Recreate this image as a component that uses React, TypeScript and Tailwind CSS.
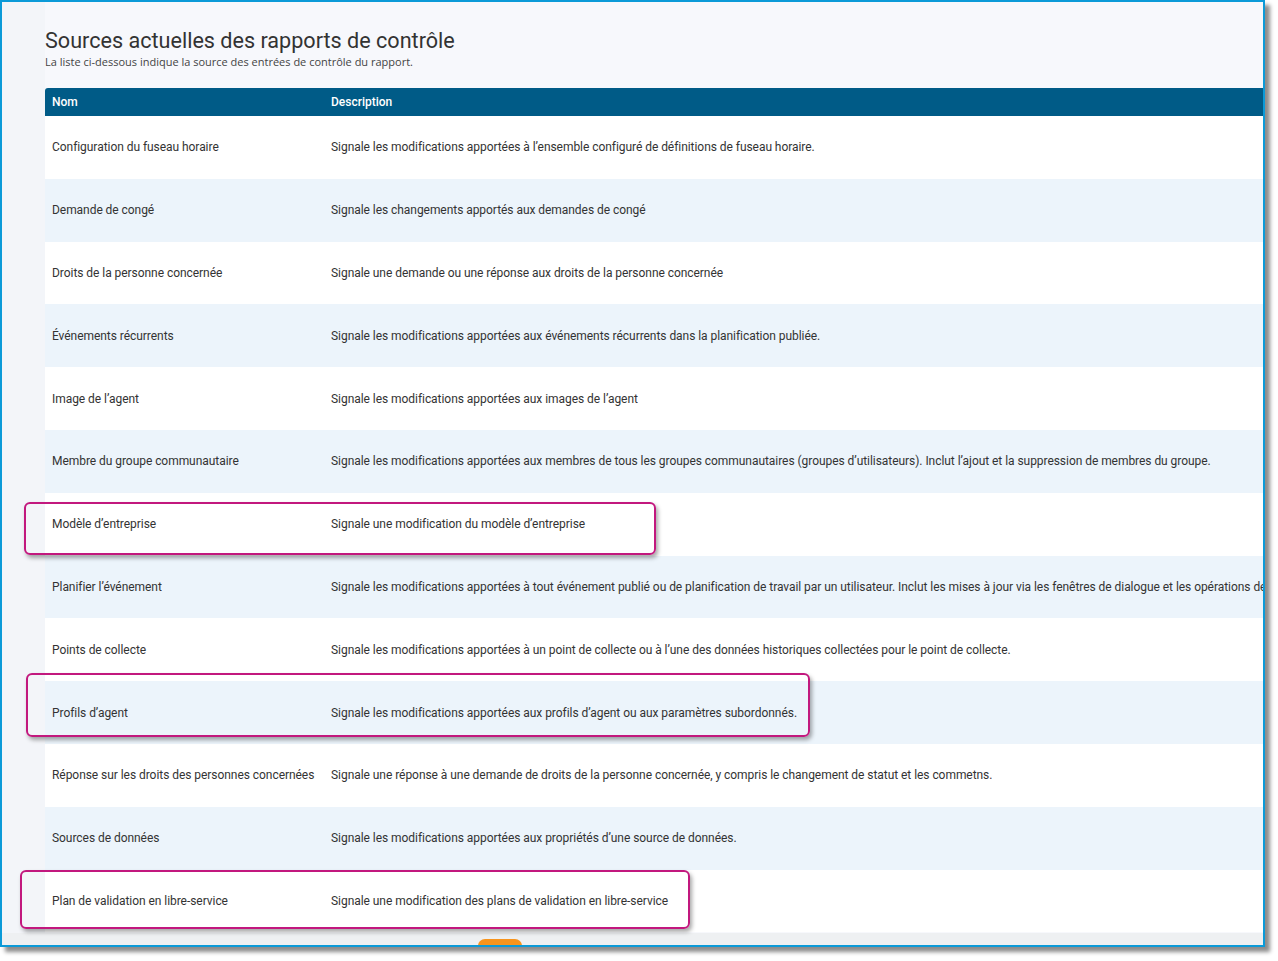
import React from "react";

const rows: [string, string][] = [
  ["Configuration du fuseau horaire", "Signale les modifications apportées à l’ensemble configuré de définitions de fuseau horaire."],
  ["Demande de congé", "Signale les changements apportés aux demandes de congé"],
  ["Droits de la personne concernée", "Signale une demande ou une réponse aux droits de la personne concernée"],
  ["Événements récurrents", "Signale les modifications apportées aux événements récurrents dans la planification publiée."],
  ["Image de l’agent", "Signale les modifications apportées aux images de l’agent"],
  ["Membre du groupe communautaire", "Signale les modifications apportées aux membres de tous les groupes communautaires (groupes d’utilisateurs). Inclut l’ajout et la suppression de membres du groupe."],
  ["Modèle d’entreprise", "Signale une modification du modèle d’entreprise"],
  ["Planifier l’événement", "Signale les modifications apportées à tout événement publié ou de planification de travail par un utilisateur. Inclut les mises à jour via les fenêtres de dialogue et les opérations de glisser-déposer."],
  ["Points de collecte", "Signale les modifications apportées à un point de collecte ou à l’une des données historiques collectées pour le point de collecte."],
  ["Profils d’agent", "Signale les modifications apportées aux profils d’agent ou aux paramètres subordonnés."],
  ["Réponse sur les droits des personnes concernées", "Signale une réponse à une demande de droits de la personne concernée, y compris le changement de statut et les commetns."],
  ["Sources de données", "Signale les modifications apportées aux propriétés d’une source de données."],
  ["Plan de validation en libre-service", "Signale une modification des plans de validation en libre-service"],
];

export default function App() {
  return (
    <div className="w-[1278px] h-[961px] bg-white relative" style={{ fontFamily: "Roboto, sans-serif" }}>
      <div className="w-[1265px] h-[947px] border-2 border-[#0b9ad8] bg-[#f7f8fc] overflow-hidden flex flex-col shadow-[5px_5px_4px_rgba(0,0,0,0.45)]">
        <div className="flex-1 flex">
          <div className="w-[43px] bg-[#f3f5f9]" />
          <div className="flex-1 flex flex-col min-w-0">
            <div className="h-[26px]" />
            <div className="text-[21.6px] leading-[26px] text-[#333]">Sources actuelles des rapports de contrôle</div>
            <div className="text-[11px] leading-[14px] text-[#444] mt-[1px]" style={{ fontFamily: '"Open Sans", sans-serif' }}>
              La liste ci-dessous indique la source des entrées de contrôle du rapport.
            </div>
            <div className="h-[19px]" />
            <div className="h-[28px] bg-[#005b87] text-white text-[12px] font-medium flex items-center rounded-tl-[3px] whitespace-nowrap">
              <div className="w-[286px] pl-[7px]">Nom</div>
              <div>Description</div>
            </div>
            {rows.map(([n, d], i) => (
              <div key={i} className={`h-[62.8px] flex items-center text-[12px] tracking-[-0.05px] text-[#333] whitespace-nowrap ${i % 2 ? "bg-[#ecf4fb]" : "bg-white"}`}>
                <div className="w-[286px] pl-[7px] shrink-0">{n}</div>
                <div>{d}</div>
              </div>
            ))}
          </div>
        </div>
        <div className="h-[12px] bg-[#eef0f2] relative shrink-0">
          <div className="absolute left-[476px] top-[6px] w-[44px] h-[14px] rounded-full bg-[#f7941d]" />
        </div>
      </div>
      <div className="absolute left-[24px] top-[502px] w-[632px] h-[53px] border-2 border-[#c2187e] rounded-[6px] shadow-[2px_3px_4px_rgba(0,0,0,0.35)]" />
      <div className="absolute left-[26px] top-[673px] w-[784px] h-[64px] border-2 border-[#c2187e] rounded-[6px] shadow-[2px_3px_4px_rgba(0,0,0,0.35)]" />
      <div className="absolute left-[20px] top-[870px] w-[670px] h-[59px] border-2 border-[#c2187e] rounded-[6px] shadow-[2px_3px_4px_rgba(0,0,0,0.35)]" />
    </div>
  );
}
